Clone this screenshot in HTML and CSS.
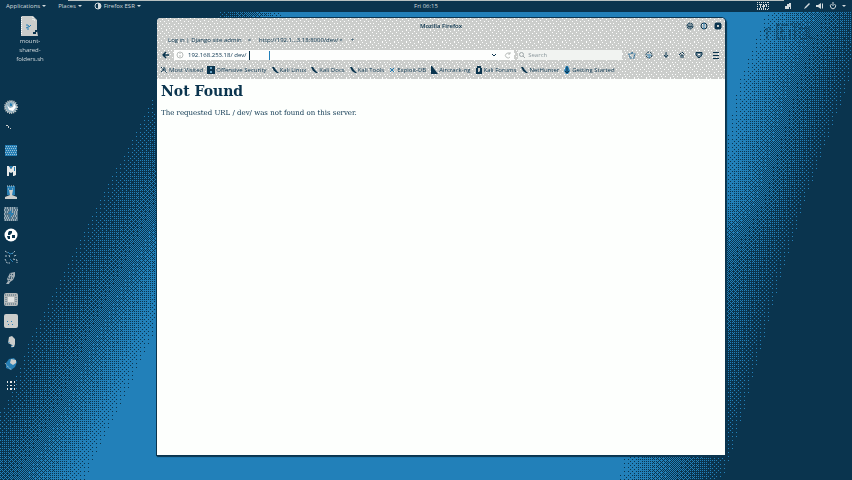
FILE: index.html
```html
<!DOCTYPE html>
<html lang="en">
<head>
<meta charset="utf-8">
<title>Desktop</title>
<link rel="stylesheet" href="styles.css">
</head>
<body>
<canvas class="wallpaper" id="wallpaper" aria-hidden="true"></canvas>
<header class="panel">
  <nav class="panel-menus">
    <button>Applications <i class="caret"></i></button>
    <button>Places <i class="caret"></i></button>
    <button><svg viewBox="0 0 8 8"><circle cx="4" cy="4" r="3" fill="none" stroke="currentColor"/><path d="M4 1a3 3 0 0 1 0 6z" fill="currentColor"/></svg>Firefox ESR <i class="caret"></i></button>
  </nav>
  <time class="clock">Fri 06:15</time>
  <div class="tray">
    <svg class="wide" viewBox="0 0 12 8"><path fill="none" stroke="currentColor" stroke-dasharray="1 1" d="M0 .5h12M0 7.5h12M.5 0v8M11.5 0v8M2 2.500h8M3 4.500h7M2 6.500h8"/><path d="M3 2h1v4H3zM6 3h2v1H7v2H6zM9 2h1v3H9z" fill="currentColor"/></svg>
    <svg class="camera" viewBox="0 0 8 8"><path d="M1 4h4v3H1zM3 2h2v2H3zM5 1h2v6H6V5H5z" fill="currentColor"/></svg>
    <svg viewBox="0 0 8 8"><path d="M1 7l1-2 4-4 1 1-4 4z" fill="currentColor"/></svg>
    <svg viewBox="0 0 8 8"><path d="M0 3h2l3-2v6L2 5H0zM6 1l1 1v4L6 7z" fill="currentColor"/></svg>
    <svg viewBox="0 0 8 8"><path d="M2.500 2a2.600 2.600 0 1 0 3 0M4 0v4" fill="none" stroke="currentColor"/></svg>
    <i class="caret"></i>
  </div>
</header>

<main class="desktop">
  <svg class="brand" viewBox="0 0 60 18" aria-hidden="true"><path d="M2 8l3-3v12M8 4v5M15 2h11M15 1v15h10M19 4v9h5M19 8h4M28 1h13M33 3v13M28 7v9M38 4v12h6V5h-5M47 4v11h6" fill="none" stroke="#0a344e" stroke-dasharray="3 1"/></svg>
  <a class="file" href="#file">
    <svg viewBox="0 0 18 20"><path d="M1 0h11l4 4v11l1 5H0V1z" fill="#cbcdcb"/><path d="M.5 1v18M12 1v3h3" stroke="#fff" fill="none" stroke-dasharray="1 1"/><path d="M5 9h2l1 2 2-2M7 11v3M5 12l2-1" stroke="#267fb5" fill="none"/><path d="M12 18v-2h2v-2h2v2h-1v2z" fill="#0a344e"/></svg>
    <span>mount-<br>shared-<br>folders.sh</span>
  </a>
  <nav class="dock" aria-label="Dock">
    <button aria-label="Firefox"><svg viewBox="0 0 14 14"><circle cx="7" cy="7" r="6" fill="#8fafc0" stroke="#cbcdcb" stroke-width="2" stroke-dasharray="1 1"/><path d="M3 5l2 5 4 1 3-4-2-4-1 4-3 1z" fill="#fff"/><path d="M6 3l2 1v2H6z" fill="#267fb5"/></svg></button>
    <button aria-label="Terminal"><svg viewBox="0 0 14 14"><path d="M2 4h2v1h1v2H4V5H2zM6 7h1v1H6z" fill="#cbcdcb"/></svg></button>
    <button aria-label="Files"><svg viewBox="0 0 14 14"><path d="M1 2h12v11H1z" fill="#267fb5"/><path d="M2 3.500h11M1 5.500h12M2 7.500h11M1 9.500h12M2 11.500h11" stroke="#9bbfd3" stroke-dasharray="1 1"/></svg></button>
    <button aria-label="Metasploit"><svg viewBox="0 0 14 14"><path d="M3 2h2l2 3 2-3h3v9l-2 1H9V8L7 9 5 8v4H3z" fill="#e7e8e7"/><path d="M5 2h4L7 5zM10 3h1v4h-1z" fill="#267fb5"/></svg></button>
    <button aria-label="Armitage"><svg viewBox="0 0 14 14"><path d="M3 1h8v9H3z" fill="#267fb5"/><path d="M3 1h8M4 4h2M8 4h2" stroke="#cbcdcb" stroke-dasharray="1 1"/><path d="M5 5h4l-1 5 5 2v2H1v-2l5-2z" fill="#cbcdcb"/></svg></button>
    <button aria-label="Burp Suite"><svg viewBox="0 0 14 14"><rect width="14" height="14" fill="#527387"/><path d="M1 1h3M6 1h6M0 3h2M4 3h5M11 3h3M1 5h4M8 5h5M0 7h2M10 7h4M1 9h3M7 9h6M0 11h5M8 11h2M12 11h2M1 13h12" stroke="#e7e8e7" stroke-dasharray="1 1"/><path d="M8 2l-4 5h3l-2 5 5-6H7z" fill="#267fb5"/></svg></button>
    <button aria-label="Maltego"><svg viewBox="0 0 14 14"><circle cx="7" cy="7" r="6.500" fill="#fff"/><path d="M5 3h3v2L6 7H4V5zM8 7h3v3H8zM3 8h3v3H4z" fill="#0a344e"/></svg></button>
    <button aria-label="Beef"><svg viewBox="0 0 14 14"><path d="M1 1l3 2M5 5l1 3M1 9l2 4h3M8 4l3-3M10 6l3-1M9 9l4 1v3M2 5v2" fill="none" stroke="#b4c4cc" stroke-dasharray="2 1"/><path d="M4 2l2 2 3-1M6 9l3 3" fill="none" stroke="#267fb5"/></svg></button>
    <button aria-label="Faraday"><svg viewBox="0 0 14 14"><path d="M6 2l5-1v4L9 9l-3 2-1 2H2l2-3-1-2z" fill="#a4b0b7"/><path d="M6 3l4 1M4 7l5 0M5 10l2-5" stroke="#0a344e" stroke-dasharray="1 1"/></svg></button>
    <button aria-label="Text editor"><svg viewBox="0 0 14 14"><rect width="14" height="13" rx="2" fill="#b4b9ba"/><path d="M1 2h12M1 11h12M2 4v6M12 4v6" stroke="#4c6a7c" stroke-dasharray="1 1"/><path d="M4 4h6v5H4z" fill="#e1e4e3"/></svg></button>
    <button aria-label="Recorder"><svg viewBox="0 0 14 14"><rect width="14" height="14" rx="2" fill="#cbcdcb"/><path d="M3 7.500h8M4 10.500h7" stroke="#267fb5" stroke-dasharray="1 3"/></svg></button>
    <button aria-label="Notes"><svg viewBox="0 0 14 14"><path d="M5 2l3-1 3 3v5l-1 3H7l1-2-4-2z" fill="#cbcdcb"/><path d="M8 10v3M5 7v2" stroke="#267fb5" stroke-dasharray="1 1"/></svg></button>
    <button aria-label="Browser"><svg viewBox="0 0 14 14"><path d="M2 6l3-4 5-1 3 4-2 5-4 3-5-2z" fill="#267fb5"/><path d="M7 2l5 1v3L9 8 6 6z" fill="#cbcdcb"/><path d="M1 6l4 5 3 2" fill="none" stroke="#cbcdcb" stroke-dasharray="1 1"/></svg></button>
    <button aria-label="Show applications"><svg viewBox="0 0 14 14"><path d="M3 3h1v2H3zM6 3h2v2H6zM10 3h1v2h-1zM3 7h1v1H3zM6 7h2v1H6zM10 7h1v1h-1zM3 10h1v2H3zM6 10h2v2H6zM10 10h1v2h-1z" fill="#e7e8e7"/></svg></button>
  </nav>

  <section class="window">
    <div class="chrome">
      <div class="titlebar">
        <h2>Mozilla Firefox</h2>
        <div class="controls">
          <button aria-label="Minimize"><svg viewBox="0 0 8 8"><circle cx="4" cy="4" r="3" fill="#8396a0" stroke="#0a344e" stroke-dasharray="2 1"/><path d="M2 4l2 1 2-1" fill="none" stroke="#0a344e"/></svg></button>
          <button aria-label="Maximize"><svg viewBox="0 0 8 8"><circle cx="4" cy="4" r="3" fill="none" stroke="#0a344e"/><path d="M4 1v6" stroke="#267fb5"/></svg></button>
          <button aria-label="Close"><svg viewBox="0 0 8 8"><rect x=".5" y=".5" width="7" height="7" rx="2" fill="#0a344e"/><path d="M3 3l2 2M5 3L3 5" stroke="#cbcdcb"/></svg></button>
        </div>
      </div>
      <div class="tabs">
        <button class="tab">Log in | Django site admin</button><button class="tab-close" aria-label="Close tab">×</button>
        <button class="tab">http://192.1...3.18:8000/dev/</button><button class="tab-close" aria-label="Close tab">×</button>
        <button class="tab-new" aria-label="New tab">+</button>
      </div>
      <div class="toolbar">
        <button aria-label="Back"><svg viewBox="0 0 8 8"><path d="M4 1L1 4l3 3M1 4h6" fill="none" stroke="#0a344e" stroke-width="1.500"/></svg></button>
        <div class="field address">
          <svg viewBox="0 0 8 8"><circle cx="4" cy="4" r="3" fill="none" stroke="#b9bdbb"/><path d="M4 2v1M4 4v2" stroke="#b9bdbb"/></svg>
          <input aria-label="Address" value="192.168.253.18/ dev/">
          <svg viewBox="0 0 8 8"><path d="M2 3l2 2 2-2" fill="none" stroke="#0a344e"/></svg>
          <svg class="reload" viewBox="0 0 8 8"><path d="M6 3a2.500 2.500 0 1 0 0 3M4 3h2V1" fill="none" stroke="#b9bdbb"/></svg>
          <i class="text-cursor"></i><i class="pointer"></i>
        </div>
        <div class="field search">
          <svg viewBox="0 0 8 8"><circle cx="3.500" cy="3.500" r="2" fill="none" stroke="#9fa7a9"/><path d="M5 5l2 2" stroke="#9fa7a9"/></svg>
          <input aria-label="Search" placeholder="Search">
        </div>
        <div class="actions">
          <button aria-label="Bookmark"><svg viewBox="0 0 8 8"><path d="M4 1l1 2h2.500L6 5l.5 2h-5L2 5 .5 3H3z" fill="none" stroke="#1d6390" stroke-dasharray="2 1"/></svg></button>
          <button aria-label="Library"><svg viewBox="0 0 8 8"><circle cx="4" cy="4" r="3" fill="none" stroke="#0a344e" stroke-dasharray="2 1"/><path d="M2 4h4M3 6h2" stroke="#267fb5"/></svg></button>
          <button aria-label="Downloads"><svg viewBox="0 0 8 8"><path d="M4 1v5M2 4l2 2.500L6 4" fill="none" stroke="#0a344e"/></svg></button>
          <button aria-label="Home"><svg viewBox="0 0 8 8"><path d="M1 4l3-3 3 3M3 4v3M5 4v3M3 4h2" fill="none" stroke="#0a344e" stroke-dasharray="3 1"/></svg></button>
          <button aria-label="Pocket"><svg viewBox="0 0 8 8"><path d="M1 1.500h6V4L5 6.500H3L1 4z" fill="#6f8795" stroke="#0a344e"/><path d="M3 3l1 1 1-1" fill="none" stroke="#fff"/></svg></button>
          <button aria-label="Menu"><svg viewBox="0 0 8 8"><path d="M1 1.500h6M1 4.500h6M1 7.500h6" stroke="#0a344e"/></svg></button>
        </div>
      </div>
      <nav class="bookmarks" aria-label="Bookmarks">
        <a href="#a"><svg viewBox="0 0 8 8"><path d="M1 1l6 6M1 6l5-4M4 1v2M2 4h4" stroke="#0a344e" stroke-dasharray="2 1"/></svg>Most Visited</a>
        <a href="#b"><svg viewBox="0 0 8 8"><path d="M0 0h8v8H0z" fill="#0a344e"/><path d="M3 1h2v2H3zM3 5h2v2H3z" fill="#6aa4c6"/></svg>Offensive Security</a>
        <a href="#c"><svg viewBox="0 0 8 8"><path d="M1 1h2l2 3 3 3H6L3 5z" fill="#0a344e"/></svg>Kali Linux</a>
        <a href="#d"><svg viewBox="0 0 8 8"><path d="M1 1h2l2 3 3 3H6L3 5z" fill="#0a344e"/></svg>Kali Docs</a>
        <a href="#e"><svg viewBox="0 0 8 8"><path d="M1 1h2l2 3 3 3H6L3 5z" fill="#0a344e"/></svg>Kali Tools</a>
        <a href="#f"><svg viewBox="0 0 8 8"><path d="M2 2l4 4M6 2L2 6" stroke="#267fb5"/></svg>Exploit-DB</a>
        <a href="#g"><svg viewBox="0 0 8 8"><path d="M1 0l1 0 3 4 3 4H1z" fill="#0a344e"/></svg>Aircrack-ng</a>
        <a href="#h"><svg viewBox="0 0 8 8"><path d="M1 2h1V0h4v2h1v6H1z" fill="#0a344e"/><path d="M3 2h2v3l-1 1H3z" fill="#cbcdcb"/></svg>Kali Forums</a>
        <a href="#i"><svg viewBox="0 0 8 8"><path d="M1 1h2l2 3 3 3H6L3 5z" fill="#0a344e"/></svg>NetHunter</a>
        <a href="#j"><svg viewBox="0 0 8 8"><path d="M3 0h2l2 5-2 3H3L1 5z" fill="#267fb5"/><path d="M4 1v5M2 5l2 2 2-2" stroke="#0a344e" fill="none"/></svg>Getting Started</a>
      </nav>
    </div>
    <article class="page">
      <h1>Not Found</h1>
      <p>The requested URL / dev/ was not found on this server.</p>
    </article>
  </section>
</main>
<script src="wallpaper.js"></script>
</body>
</html>
```
FILE: styles.css
```css
:root {
  --navy: #0a344e;
  --blue: #2280b9;
  --grey: #cbcdcb;
}

* { box-sizing: border-box; }

body {
  margin: 0;
  height: 100vh;
  display: flex;
  flex-direction: column;
  overflow: hidden;
  background: var(--navy);
  font: 6px/8px "Open Sans", "Noto Sans", sans-serif;
}

button, input {
  font: inherit;
  color: inherit;
  background: none;
  border: 0;
  padding: 0;
  margin: 0;
}

a { color: inherit; text-decoration: none; }
svg { display: block; flex: none; width: 8px; height: 8px; }
button { display: flex; align-items: center; }

.wallpaper { position: absolute; inset: 0; z-index: -1; }

.panel {
  display: grid;
  grid-template-columns: 1fr auto 1fr;
  align-items: center;
  height: 12px;
  padding: 0 6px;
  color: #d4dbde;
  background: linear-gradient(90deg, transparent 8%, #b8c1c1 8% 92%, transparent 92%) top / 100% 1px no-repeat var(--navy);
}
.panel-menus { display: flex; gap: 12px; }
.panel-menus button { gap: 2px; }
.caret { border: 2px solid transparent; border-top-color: currentColor; border-bottom: 0; }
.tray { display: flex; align-items: center; justify-content: flex-end; gap: 5px; }
.tray .wide { width: 12px; }
.tray .camera { margin: 0 6px 0 10px; }

.desktop { position: relative; flex: 1; display: flex; min-height: 0; }

.brand { position: absolute; top: 11px; right: 30px; width: 60px; height: 18px; }

.file {
  position: absolute;
  top: 4px;
  left: 12px;
  width: 36px;
  display: flex;
  flex-direction: column;
  align-items: center;
  gap: 1px;
  color: #d4dbde;
  text-align: center;
  line-height: 9px;
}
.file svg { width: 18px; height: 20px; }

.dock {
  flex: none;
  width: 22px;
  padding: 84px 0;
  display: grid;
  grid-auto-rows: 1fr;
}
.dock button { justify-content: center; }
.dock svg { width: 14px; height: 14px; }

.window {
  flex: 1;
  min-width: 0;
  margin: 6px 127px 25px 135px;
  display: flex;
  flex-direction: column;
  border-radius: 4px 4px 0 0;
  background: #fdfffd;
  box-shadow: 0 0 0 1px var(--navy), 1px 1px 1px 1px var(--navy);
}

.chrome {
  border-radius: 4px 4px 0 0;
  padding-bottom: 3px;
  color: var(--navy);
  background:
    url("data:image/svg+xml,%3Csvg xmlns='http://www.w3.org/2000/svg' width='12' height='12' shape-rendering='crispEdges'%3E%3Cpath fill='%23fff' d='M1 0h1v1h-1zM5 1h1v1h-1zM9 0h1v1h-1zM3 3h1v1h-1zM7 3h1v1h-1zM11 2h1v1h-1zM0 5h1v1h-1zM5 6h1v1h-1zM9 5h1v1h-1zM2 8h1v1h-1zM7 8h1v1h-1zM11 8h1v1h-1zM0 10h1v1h-1zM4 10h1v1h-1zM9 11h1v1h-1z'/%3E%3C/svg%3E"),
    var(--grey);
}

.titlebar { display: grid; grid-template-columns: 1fr auto 1fr; align-items: center; height: 15px; padding: 0 3px; }
.titlebar h2 { grid-column: 2; margin: 0; font-size: 6px; line-height: 8px; font-weight: 600; }
.controls { display: flex; justify-content: flex-end; gap: 6px; }

.tabs { display: flex; align-items: center; height: 14px; padding-left: 11px; }
.tab-close { margin: 0 8px 0 6px; }
.tab:nth-of-type(3) + .tab-close { margin-left: 1px; }

.toolbar { display: flex; align-items: center; gap: 4px; height: 16px; padding: 0 5px; }
.field { display: flex; align-items: center; height: 10px; min-width: 0; background: #fdfefd; }
.field input { flex: 1; min-width: 0; height: 10px; outline: 0; }
.address { position: relative; flex: 340; padding: 0 2px; gap: 4px; }
.address .reload { margin-left: 2px; }
.search { flex: 105; gap: 2px; background: #f1f3f1; }
.search input::placeholder { color: #8b979c; opacity: 1; }
.text-cursor, .pointer { position: absolute; top: 1px; left: 75px; width: 1px; height: 9px; background: var(--navy); }
.pointer { left: 95px; background: var(--blue); }

.actions { display: flex; justify-content: space-between; width: 94px; padding-left: 2px; }

.bookmarks { display: flex; align-items: center; gap: 4px; height: 12px; margin-top: 1px; padding: 0 3px; white-space: nowrap; }
.bookmarks a { display: flex; align-items: center; gap: 1px; }

.page { padding: 3px 4px; color: var(--navy); font-family: "DejaVu Serif", serif; }
.page h1 { margin: 0; font-size: 14px; line-height: 18px; }
.page p { margin: 8px 0 0; font-size: 7px; line-height: 10px; }
```
FILE: wallpaper.js
```js
// Paints the two-colour ordered-dither beam across the desktop.
const canvas = document.getElementById("wallpaper");
const BAYER = [0, 8, 2, 10, 12, 4, 14, 6, 3, 11, 1, 9, 15, 7, 13, 5];

// Edges of the beam as [y, x] points in an 852 by 480 space.
const LEFT_DARK = [[12, 217], [100, 148], [200, 95], [340, 25], [400, 3], [480, -50]];
const LEFT_BLUE = [[12, 285], [100, 270], [200, 225], [358, 146], [480, 88]];
const RIGHT_BLUE = [[12, 762], [50, 748], [80, 735], [200, 712], [260, 660], [450, 620], [480, 615]];
const RIGHT_DARK = [[12, 880], [92, 848], [200, 808], [300, 778], [400, 750], [460, 733], [480, 725]];

function at(points, y) {
  if (y <= points[0][0]) return points[0][1];
  for (let i = 1; i < points.length; i++) {
    const [y0, x0] = points[i - 1];
    const [y1, x1] = points[i];
    if (y <= y1) return x0 + ((x1 - x0) * (y - y0)) / (y1 - y0);
  }
  return points[points.length - 1][1];
}

function paint() {
  const w = (canvas.width = window.innerWidth);
  const h = (canvas.height = window.innerHeight);
  const ctx = canvas.getContext("2d");
  ctx.fillStyle = "#0a344e";
  ctx.fillRect(0, 0, w, h);
  ctx.fillStyle = "#2280b9";
  for (let y = 0; y < h; y++) {
    const v = (y * 480) / h;
    const a = at(LEFT_DARK, v), b = at(LEFT_BLUE, v);
    const c = at(RIGHT_BLUE, v), d = at(RIGHT_DARK, v);
    for (let x = 0; x < w; x++) {
      const u = (x * 852) / w;
      const level = Math.min((u - a) / (b - a), (d - u) / (d - c));
      if (level > (BAYER[(y % 4) * 4 + (x % 4)] + 0.5) / 16) ctx.fillRect(x, y, 1, 1);
    }
  }
}

paint();
window.addEventListener("resize", paint);
```
